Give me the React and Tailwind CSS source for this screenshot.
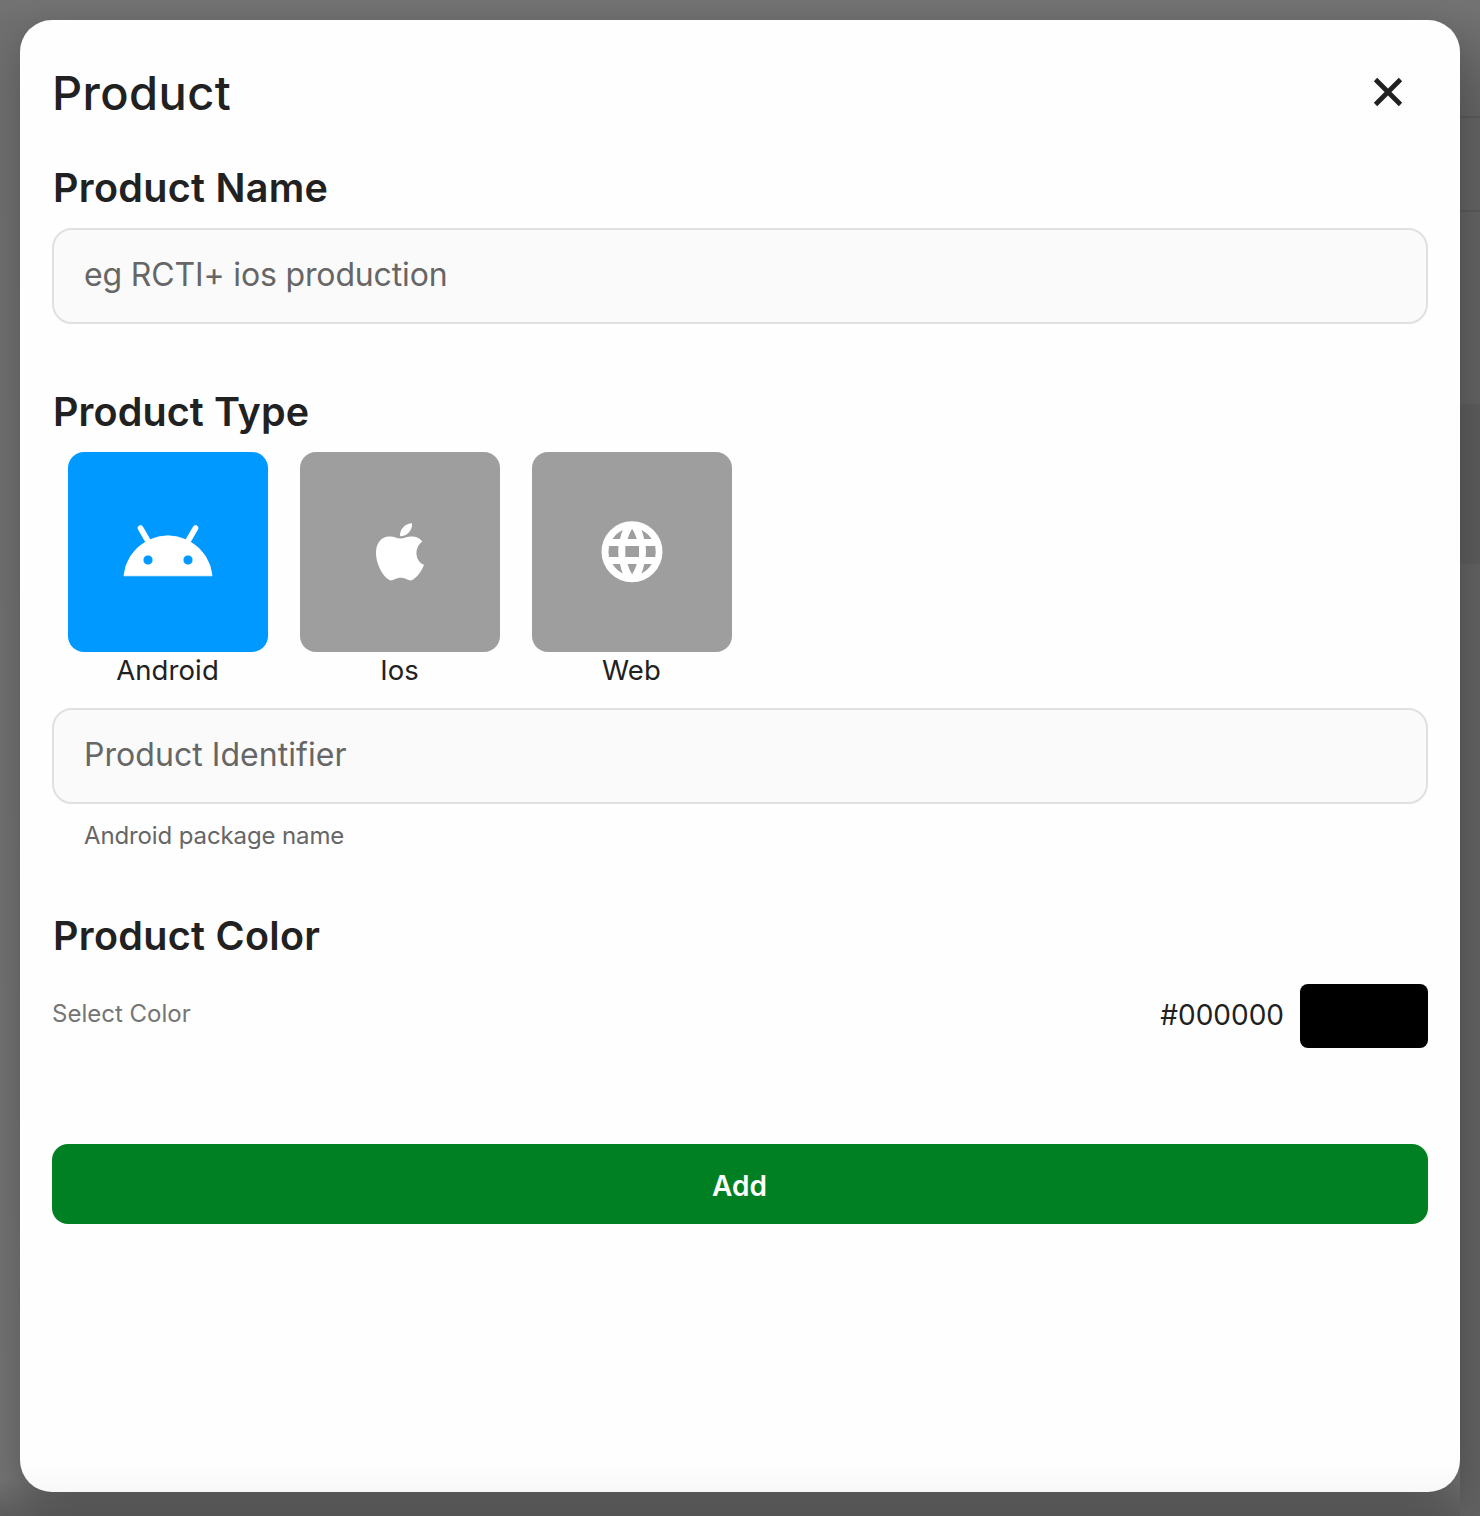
function AndroidIcon() {
  return (
    <svg viewBox="0 0 24 24" className="h-24 w-24" fill="currentColor" stroke="currentColor" strokeWidth="0.2">
      <path d="M17.6 9.48l1.84-3.18c.16-.31.04-.69-.26-.85-.29-.15-.65-.06-.83.22l-1.88 3.24a11.463 11.463 0 0 0-8.94 0L5.65 5.67a.643.643 0 0 0-.87-.2c-.28.18-.37.54-.22.83L6.4 9.48A10.78 10.78 0 0 0 1 17.95h22a10.78 10.78 0 0 0-5.4-8.47zM7 15.25a1.25 1.25 0 1 1 0-2.5 1.25 1.25 0 0 1 0 2.5zm10 0a1.25 1.25 0 1 1 0-2.5 1.25 1.25 0 0 1 0 2.5z" />
    </svg>
  );
}

function AppleIcon() {
  return (
    <svg viewBox="48 41 144 173" className="h-[58px] w-12" fill="currentColor">
      <path d="M121 87C110 87 103 80 87 81C65 81 48 100 48 130C48 165 70 206 92 213C102 213 108 205 122 205C136 205 142 213 153 213C170 207 185 185 192 166C166 156 160 116 187 96C178 84 166 81 155 81C141 81 132 87 121 87Z" />
      <path d="M120 80C119 58 135 42 156 41C158 61 142 80 120 80Z" />
    </svg>
  );
}

function GlobeIcon() {
  return (
    <svg viewBox="0 0 72 72" className="h-[72px] w-[72px]" fill="currentColor" fillRule="evenodd">
      <path d="M36 5.2a30.5 30.5 0 1 0 0 61a30.5 30.5 0 1 0 0-61ZM29.3 30H43V41H29.3ZM13 30H22.5Q22 35.5 22.5 41H13Q12 35.5 13 30ZM49.7 30H59.2Q60.2 35.5 59.2 41H49.7Q50.2 35.5 49.7 30ZM36.1 12.7Q39 17 40.8 23H31.5Q33.3 17 36.1 12.7ZM36.1 58.3Q33.3 54 31.5 48H40.8Q39 54 36.1 58.3ZM26.8 14Q25 18 24 23H16.5Q20.5 17 26.8 14ZM26.8 57.4Q25 53.5 24 48H16.5Q20.5 54.4 26.8 57.4ZM45.4 14Q51.7 17 55.7 23H48.2Q47.2 18 45.4 14ZM45.4 57.4Q51.7 54.4 55.7 48H48.2Q47.2 53.5 45.4 57.4Z" />
    </svg>
  );
}

function TypeCard({ label, color, children }) {
  return (
    <div className="flex w-[200px] flex-col items-center">
      <button className={`flex h-[200px] w-full items-center justify-center rounded-[16px] text-white ${color}`}>
        {children}
      </button>
      <span className="h-9 pr-px text-[27.5px] leading-9 tracking-[0.1px]">{label}</span>
    </div>
  );
}

function Field({ placeholder, tracking }) {
  return (
    <input
      placeholder={placeholder}
      className={`block h-24 w-full rounded-[20px] border-2 border-[#e0e0e0] bg-[#fafafa] px-[30px] pb-1 text-[32px] text-[#212121] outline-none placeholder:text-[#666666] ${tracking}`}
    />
  );
}

function Heading({ children, tracking }) {
  return <h2 className={`h-14 pl-px text-[39.5px] font-[560] leading-[56px] ${tracking}`}>{children}</h2>;
}

export default function App() {
  return (
    <div className="flex h-[1516px] w-[1480px] overflow-hidden bg-[linear-gradient(180deg,#737373_0px,#6f6f6f_25px,#737373_1480px,#5c5c5c_1516px)] font-['Inter',sans-serif] text-[#212121]">
      <main className="relative z-10 ml-5 mt-5 flex h-[1472px] w-[1440px] shrink-0 flex-col rounded-[32px] bg-[linear-gradient(180deg,#fefefe_1440px,#f8f8f8_1472px)] px-8 shadow-[0_16px_40px_rgba(0,0,0,0.24)]">
        <header className="flex h-[140px] items-center justify-between pr-6 pt-1">
          <h1 className="pt-0.5 text-[47px] font-[450] leading-[64px] tracking-[0.4px]">Product</h1>
          <button aria-label="Close" className="flex h-8 w-8 items-center justify-center">
            <svg viewBox="0 0 32 32" className="h-8 w-8" stroke="#212121" strokeWidth="4.8" fill="none">
              <path d="M3.5 3.5 28.5 28.5M28.5 3.5 3.5 28.5" />
            </svg>
          </button>
        </header>
        <Heading tracking="tracking-[0.3px]">Product Name</Heading>
        <div className="mt-3">
          <Field placeholder="eg RCTI+ ios production" tracking="tracking-[-0.15px]" />
        </div>
        <div className="mt-[60px]">
          <Heading tracking="tracking-[0.1px]">Product Type</Heading>
        </div>
        <div className="mt-3 flex gap-8 px-4">
          <TypeCard label="Android" color="bg-[#0099ff]">
            <AndroidIcon />
          </TypeCard>
          <TypeCard label="Ios" color="bg-[#9e9e9e]">
            <AppleIcon />
          </TypeCard>
          <TypeCard label="Web" color="bg-[#9e9e9e]">
            <GlobeIcon />
          </TypeCard>
        </div>
        <div className="mt-5">
          <Field placeholder="Product Identifier" tracking="tracking-[0.05px]" />
        </div>
        <p className="mt-4 pl-8 text-[24px] leading-8 tracking-[-0.12px] text-[#666666]">Android package name</p>
        <div className="mt-[56px]">
          <Heading tracking="tracking-[0.3px]">Product Color</Heading>
        </div>
        <div className="mt-5 flex h-16 items-center justify-between">
          <span className="pb-1 text-[24px] text-[#757575]">Select Color</span>
          <div className="flex items-center gap-4">
            <span className="pb-[3px] text-[28px]">#000000</span>
            <div className="h-16 w-32 rounded-[8px] bg-black" />
          </div>
        </div>
        <button className="mt-24 h-20 w-full rounded-[16px] bg-[#008022] pr-px pt-1 text-[28px] font-semibold text-white">Add</button>
      </main>
      <aside className="flex h-full w-5 shrink-0 flex-col bg-[linear-gradient(180deg,#737373_0px,#696969_60px,#616161_116px)]">
        <div className="h-[118px] border-b-2 border-[#585858]" />
        <div className="h-[94px] border-b-2 border-[#585858]" />
        <div className="mt-[192px] h-40 bg-[#5b5b5b]" />
      </aside>
    </div>
  );
}
